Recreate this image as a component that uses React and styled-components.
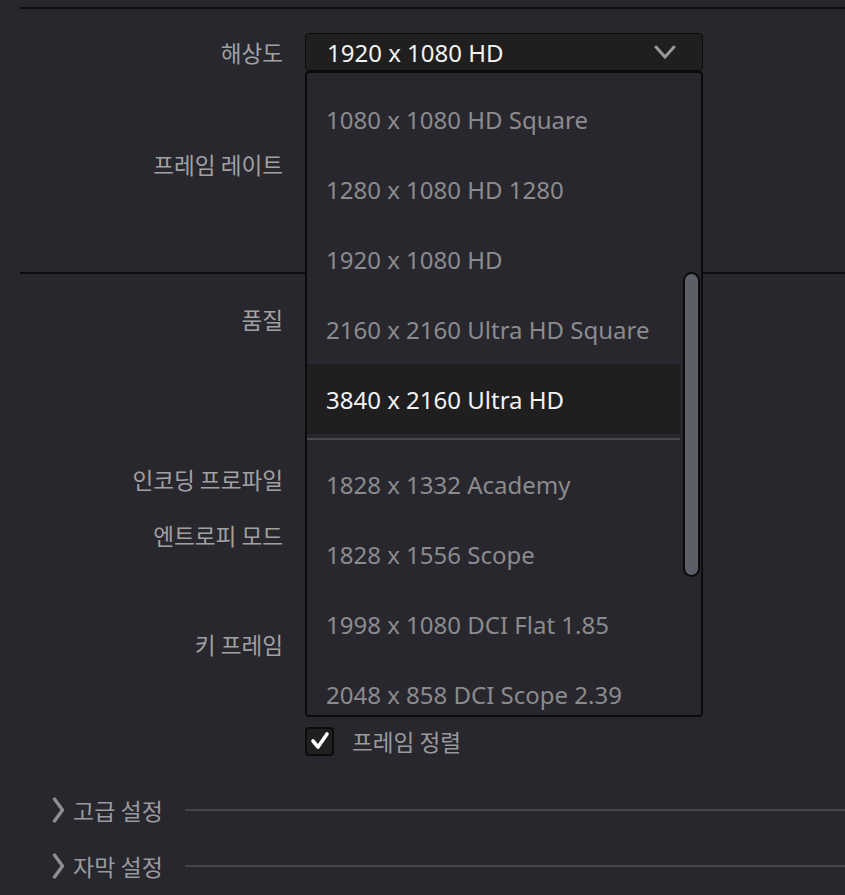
import styled, { createGlobalStyle } from 'styled-components'

const GlobalStyle = createGlobalStyle`
  html, body {
    margin: 0;
    padding: 0;
    background: #28272d;
  }
  body {
    font-family: 'Noto Sans', 'Noto Sans CJK KR', sans-serif;
  }
`

const Page = styled.div`
  width: 845px;
  height: 895px;
  overflow: hidden;
  padding-top: 7px;
  box-sizing: border-box;
  background: #28272d;
`
const Divider = styled.div`
  margin-left: 20px;
  height: 2px;
  background: #0e0e10;
`
const Row = styled.div`
  display: grid;
  grid-template-columns: 283px 398px;
  column-gap: 22px;
  align-items: center;
  height: ${(p) => p.$h}px;
`
const Label = styled.div`
  text-align: right;
  font-family: 'Noto Sans CJK KR', 'Noto Sans', sans-serif;
  font-size: 22.6px;
  color: #a1a1a3;
`
const SelectWrap = styled.div`
  position: relative;
  width: 398px;
`
const SelectBox = styled.div`
  display: flex;
  align-items: center;
  justify-content: space-between;
  box-sizing: border-box;
  height: 38px;
  padding: 0 26px 0 21px;
  background: #1f1f20;
  border: 1px solid #0b0b0c;
  border-radius: 4px;
  font-size: 24px;
  color: #f2f2f2;
`
const Dropdown = styled.div`
  position: absolute;
  top: 38px;
  left: 0;
  z-index: 5;
  box-sizing: border-box;
  width: 398px;
  height: 646px;
  display: grid;
  grid-template-columns: 373px 1fr;
  background: #28272d;
  border: 2px solid #0b0b0c;
  border-radius: 4px;
  overflow: hidden;
`
const List = styled.div`
  padding-top: 11px;
`
const Item = styled.div`
  display: flex;
  align-items: center;
  height: 70px;
  padding-left: 19px;
  font-size: 24px;
  color: ${(p) => (p.$active ? '#f2f2f2' : '#8b8b8e')};
  background: ${(p) => (p.$active ? '#1f1f20' : 'transparent')};
`
const Separator = styled.div`
  height: 2px;
  margin: 4px 0 9px;
  background: #4a4a51;
`
const Track = styled.div`
  padding: 199px 0 0 3px;
`
const Thumb = styled.div`
  box-sizing: border-box;
  width: 17px;
  height: 305px;
  background: #5d5f68;
  border: 2px solid #0b0b0c;
  border-radius: 9px;
`
const CheckRow = styled.div`
  display: flex;
  align-items: center;
  gap: 18px;
`
const CheckBox = styled.div`
  display: flex;
  align-items: center;
  justify-content: center;
  box-sizing: border-box;
  width: 29px;
  height: 29px;
  background: #1f1f20;
  border: 2px solid #0b0b0c;
  border-radius: 4px;
`
const CheckLabel = styled.span`
  font-family: 'Noto Sans CJK KR', 'Noto Sans', sans-serif;
  font-size: 22.6px;
  color: #9a9a9d;
`
const Section = styled.div`
  display: flex;
  align-items: center;
  height: 56px;
  padding-left: 52px;
`
const SectionTitle = styled.span`
  margin-left: 8px;
  font-family: 'Noto Sans CJK KR', 'Noto Sans', sans-serif;
  font-size: 23px;
  color: #9a9a9d;
`
const SectionLine = styled.div`
  flex: 1;
  height: 2px;
  margin: 0 0 0 22px;
  background: #45454b;
`

const Chevron = () => (
  <svg width="22" height="14" viewBox="0 0 22 14">
    <path d="M2 2 L11 12 L20 2" fill="none" stroke="#9a9a9d" strokeWidth="3" strokeLinecap="round" />
  </svg>
)

const Arrow = () => (
  <svg width="13" height="26" viewBox="0 0 13 26">
    <path d="M2.5 2 L10.5 13 L2.5 24" fill="none" stroke="#8e8e91" strokeWidth="3.4" strokeLinecap="round" strokeLinejoin="round" />
  </svg>
)

const Check = () => (
  <svg width="20" height="20" viewBox="0 0 20 20">
    <path d="M3 10 L8 16 L17 3" fill="none" stroke="#ffffff" strokeWidth="3.6" strokeLinecap="round" strokeLinejoin="round" />
  </svg>
)

const topItems = [
  '1080 x 1080 HD Square',
  '1280 x 1080 HD 1280',
  '1920 x 1080 HD',
  '2160 x 2160 Ultra HD Square',
  '3840 x 2160 Ultra HD',
]
const dciItems = [
  '1828 x 1332 Academy',
  '1828 x 1556 Scope',
  '1998 x 1080 DCI Flat 1.85',
  '2048 x 858 DCI Scope 2.39',
]

const App = () => {
  return (
    <Page>
      <GlobalStyle />
      <Divider />
      <Row $h={86}>
        <Label>해상도</Label>
        <SelectWrap>
          <SelectBox>
            <span>1920 x 1080 HD</span>
            <Chevron />
          </SelectBox>
          <Dropdown>
            <List>
              {topItems.map((t) => (
                <Item key={t} $active={t === '3840 x 2160 Ultra HD'}>
                  {t}
                </Item>
              ))}
              <Separator />
              {dciItems.map((t) => (
                <Item key={t}>{t}</Item>
              ))}
            </List>
            <Track>
              <Thumb />
            </Track>
          </Dropdown>
        </SelectWrap>
      </Row>
      <Row $h={138}>
        <Label>프레임 레이트</Label>
      </Row>
      <Row $h={39} />
      <Divider />
      <Row $h={90}>
        <Label>품질</Label>
      </Row>
      <Row $h={90} />
      <Row $h={50}>
        <Label>인코딩 프로파일</Label>
      </Row>
      <Row $h={62}>
        <Label>엔트로피 모드</Label>
      </Row>
      <Row $h={53} />
      <Row $h={50}>
        <Label>키 프레임</Label>
      </Row>
      <Row $h={52} />
      <Row $h={40}>
        <div />
        <CheckRow>
          <CheckBox>
            <Check />
          </CheckBox>
          <CheckLabel>프레임 정렬</CheckLabel>
        </CheckRow>
      </Row>
      <Row $h={21} />
      <Section>
        <Arrow />
        <SectionTitle>고급 설정</SectionTitle>
        <SectionLine />
      </Section>
      <Section>
        <Arrow />
        <SectionTitle>자막 설정</SectionTitle>
        <SectionLine />
      </Section>
    </Page>
  )
}

export default App
